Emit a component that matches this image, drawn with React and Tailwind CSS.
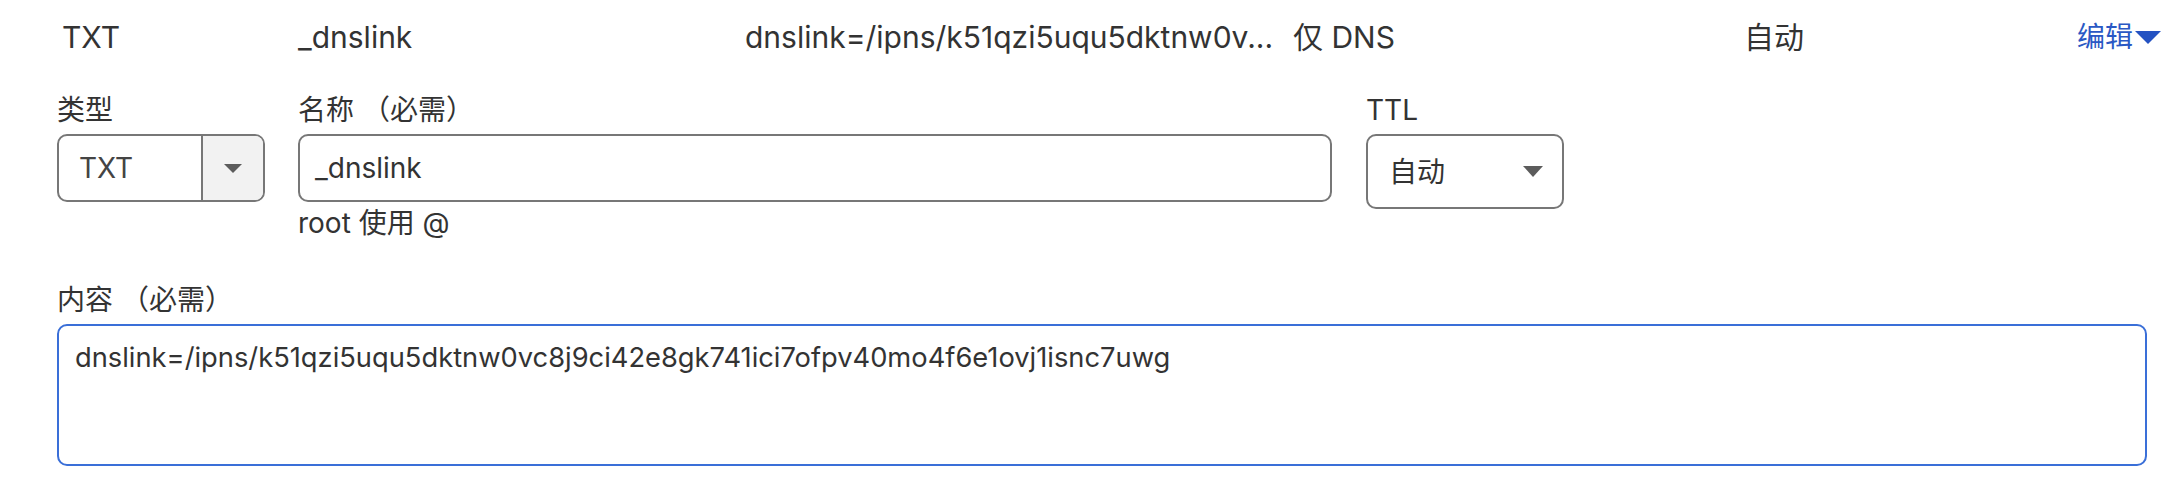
const font = { fontFamily: 'Inter, "Noto Sans CJK SC", sans-serif' };

function Caret({ className = 'w-[18px] h-[9px]', color = '#5c5c5c' }) {
  return (
    <svg viewBox="0 0 18 9" className={className} preserveAspectRatio="none">
      <polygon points="0,0 18,0 9,9" fill={color} />
    </svg>
  );
}

function Label({ children }) {
  return <div className="h-[28px] text-[28px] leading-[28px] text-[#333] whitespace-nowrap">{children}</div>;
}

export default function App() {
  return (
    <div className="w-[2174px] h-[496px] bg-white text-[#333] overflow-hidden" style={font}>
      {/* record summary row */}
      <div className="flex items-start pt-[22px] pl-[62px] pr-[13px] text-[30px] leading-[30px] whitespace-nowrap">
        <div className="w-[236px]">TXT</div>
        <div className="w-[447px]">_dnslink</div>
        <div className="w-[548px]">dnslink=/ipns/k51qzi5uqu5dktnw0v...</div>
        <div className="w-[451px]">仅 DNS</div>
        <div className="flex-1">自动</div>
        <button className="flex items-center gap-[2px] text-[28px] text-[#2a58c4]">
          <span>编辑</span>
          <Caret className="w-[26px] h-[13px]" color="#2452c2" />
        </button>
      </div>

      {/* edit form */}
      <div className="pl-[57px] pr-[27px] pt-[44px]">
        <div className="flex items-start">
          <div className="w-[208px]">
            <Label>类型</Label>
            <div className="mt-[10px] flex h-[68px] rounded-[10px] border-2 border-[#777] overflow-hidden">
              <div className="flex-1 flex items-center pl-[20px] text-[28px] text-[#444]">TXT</div>
              <div className="w-[62px] border-l-2 border-[#777] bg-[#f2f2f2] flex items-center justify-center">
                <Caret />
              </div>
            </div>
          </div>

          <div className="ml-[33px] w-[1034px]">
            <Label>名称 （必需）</Label>
            <div className="mt-[10px] h-[68px] rounded-[10px] border-2 border-[#777] flex items-center pl-[15px] text-[28px] text-[#333]">
              _dnslink
            </div>
            <div className="mt-[7px] h-[28px] text-[28px] leading-[28px] text-[#333]">root 使用 @</div>
          </div>

          <div className="ml-[34px] w-[198px]">
            <Label>TTL</Label>
            <div className="mt-[10px] h-[75px] rounded-[10px] border-2 border-[#777] flex items-center justify-between pl-[21px] pr-[19px] text-[28px] text-[#333]">
              <span>自动</span>
              <Caret className="w-[20px] h-[11px]" />
            </div>
          </div>
        </div>

        <div className="mt-[49px]">
          <Label>内容 （必需）</Label>
          <div className="mt-[10px] h-[142px] rounded-[10px] border-2 border-[#3a6fd8] pt-[18px] pl-[16px] text-[27.3px] leading-[28px] text-[#333] whitespace-nowrap">
            dnslink=/ipns/k51qzi5uqu5dktnw0vc8j9ci42e8gk741ici7ofpv40mo4f6e1ovj1isnc7uwg
          </div>
        </div>
      </div>
    </div>
  );
}
